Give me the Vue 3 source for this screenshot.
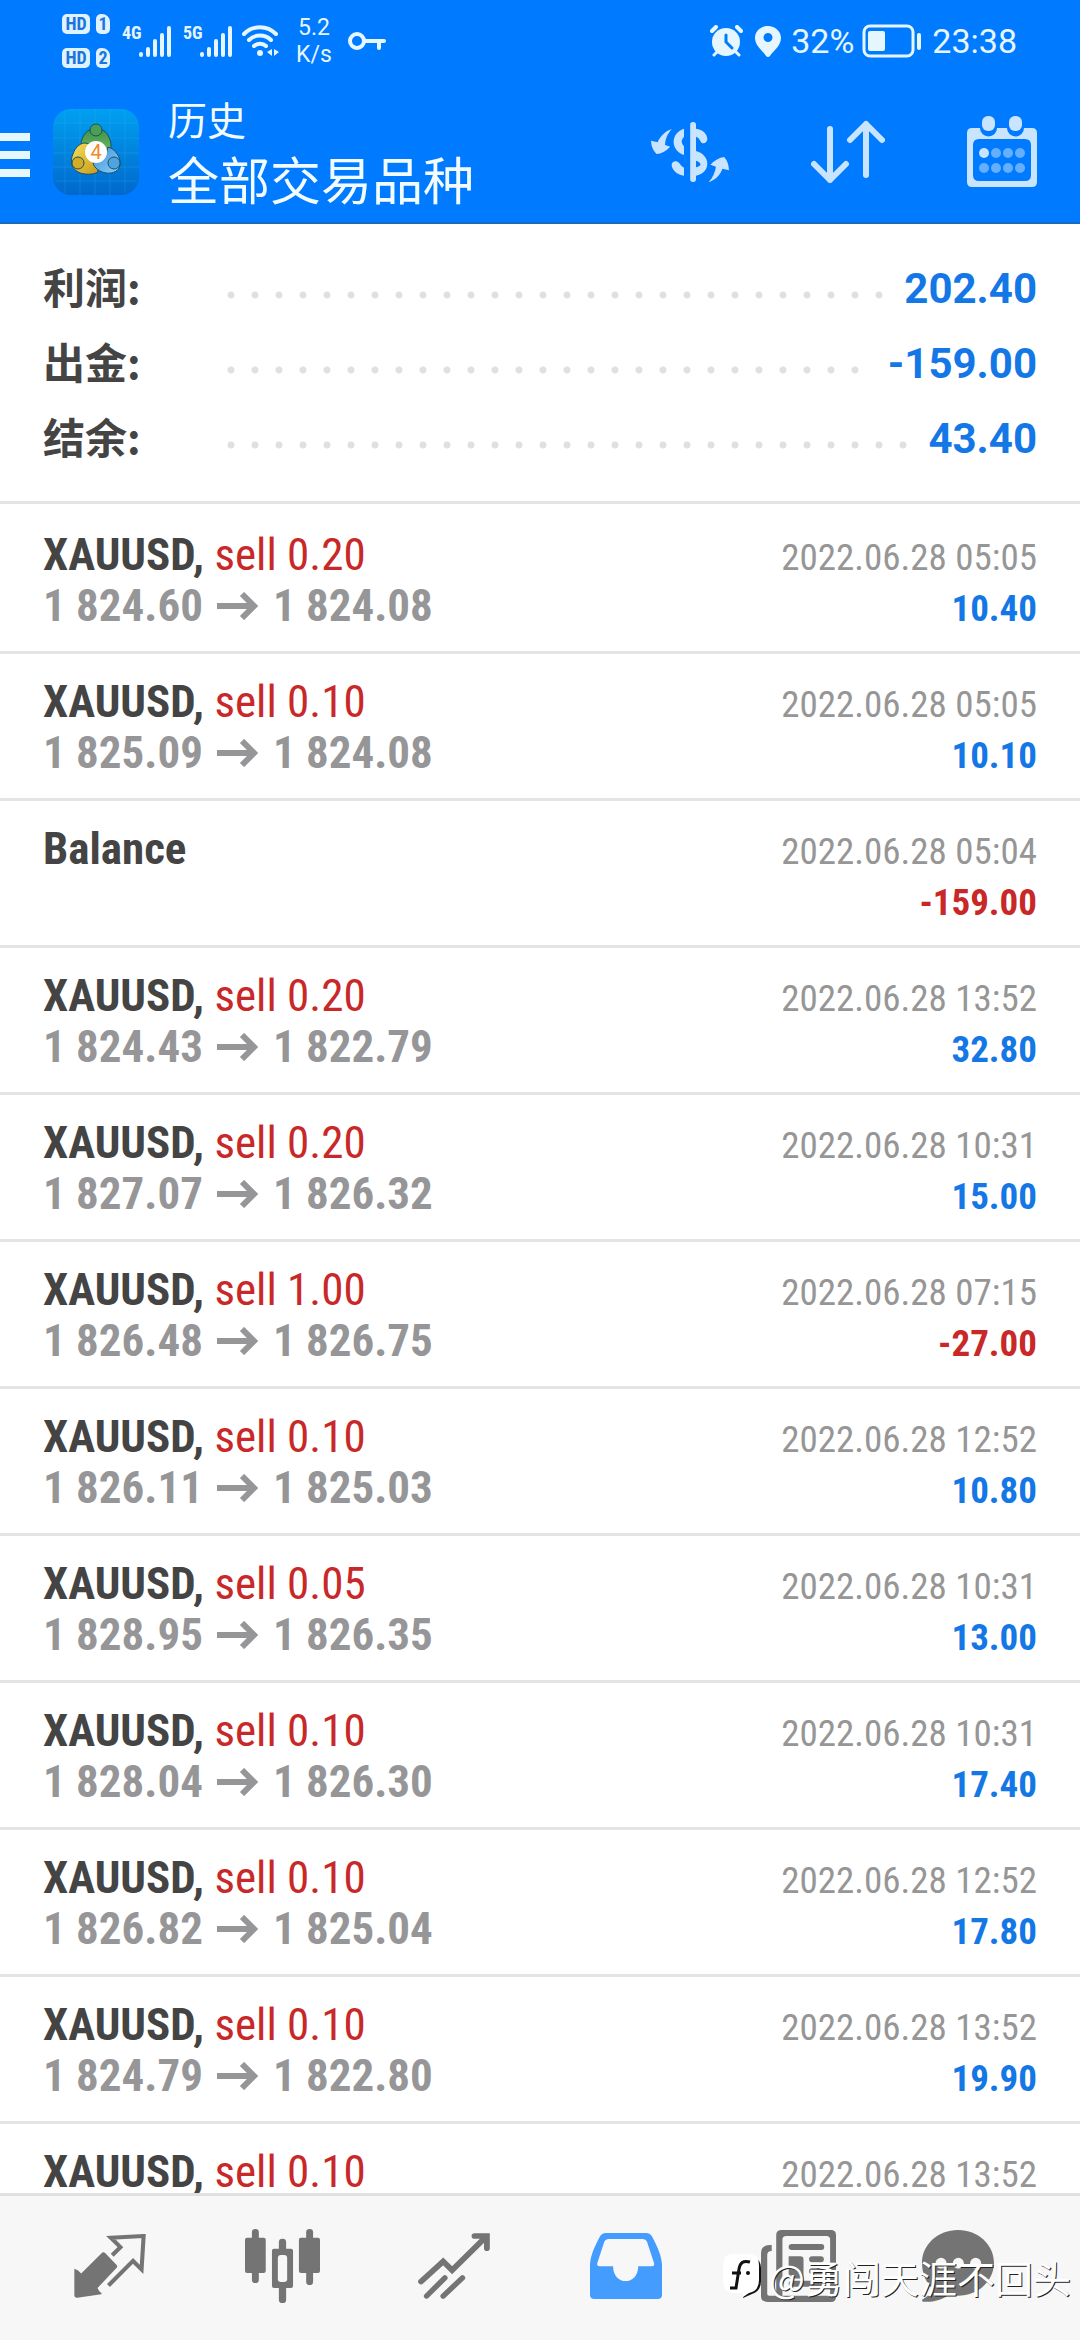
<script setup>
const summary = [
  { label: '利润:', value: '202.40' },
  { label: '出金:', value: '-159.00' },
  { label: '结余:', value: '43.40' },
]

const deals = [
  { symbol: 'XAUUSD', volume: '0.20', open: '1 824.60', close: '1 824.08', time: '2022.06.28 05:05', profit: '10.40' },
  { symbol: 'XAUUSD', volume: '0.10', open: '1 825.09', close: '1 824.08', time: '2022.06.28 05:05', profit: '10.10' },
  { symbol: 'Balance', time: '2022.06.28 05:04', profit: '-159.00' },
  { symbol: 'XAUUSD', volume: '0.20', open: '1 824.43', close: '1 822.79', time: '2022.06.28 13:52', profit: '32.80' },
  { symbol: 'XAUUSD', volume: '0.20', open: '1 827.07', close: '1 826.32', time: '2022.06.28 10:31', profit: '15.00' },
  { symbol: 'XAUUSD', volume: '1.00', open: '1 826.48', close: '1 826.75', time: '2022.06.28 07:15', profit: '-27.00' },
  { symbol: 'XAUUSD', volume: '0.10', open: '1 826.11', close: '1 825.03', time: '2022.06.28 12:52', profit: '10.80' },
  { symbol: 'XAUUSD', volume: '0.05', open: '1 828.95', close: '1 826.35', time: '2022.06.28 10:31', profit: '13.00' },
  { symbol: 'XAUUSD', volume: '0.10', open: '1 828.04', close: '1 826.30', time: '2022.06.28 10:31', profit: '17.40' },
  { symbol: 'XAUUSD', volume: '0.10', open: '1 826.82', close: '1 825.04', time: '2022.06.28 12:52', profit: '17.80' },
  { symbol: 'XAUUSD', volume: '0.10', open: '1 824.79', close: '1 822.80', time: '2022.06.28 13:52', profit: '19.90' },
  { symbol: 'XAUUSD', volume: '0.10', time: '2022.06.28 13:52' },
]
</script>

<template>
  <div class="screen">
    <header class="header">
      <div class="status">
        <div class="sims">
          <div class="sim"><span class="hd">HD</span><span class="slot">1</span></div>
          <div class="sim"><span class="hd">HD</span><span class="slot">2</span></div>
        </div>
        <div class="signal">
          <span class="gen">4G</span>
          <svg width="32" height="31" viewBox="0 0 32 31" stroke="currentColor" stroke-width="4" stroke-linecap="round">
            <path d="M2 28v1M9 23v6M16 15v14M23 9v20M30 2v27" />
          </svg>
        </div>
        <div class="signal">
          <span class="gen">5G</span>
          <svg width="32" height="31" viewBox="0 0 32 31" stroke="currentColor" stroke-width="4" stroke-linecap="round">
            <path d="M2 28v1M9 23v6M16 15v14M23 9v20M30 2v27" />
          </svg>
        </div>
        <svg class="wifi" width="38" height="32" viewBox="0 0 38 32" fill="none" stroke="currentColor" stroke-width="4" stroke-linecap="round">
          <path d="M2 9c9-9 23-9 32 0M7 15c6-6 16-6 22 0M12 21c3-3 9-3 12 0" />
          <circle cx="18" cy="28" r="3" fill="currentColor" stroke="none" />
          <path d="M30 24v7l-5-4zM32 24v7l5-4z" fill="currentColor" stroke="none" />
        </svg>
        <div class="speed"><span>5.2</span><span>K/s</span></div>
        <svg class="key" width="38" height="20" viewBox="0 0 38 20" fill="none" stroke="currentColor" stroke-width="4">
          <circle cx="9" cy="10" r="7" />
          <path d="M16 10h20M31 10v7" stroke-linecap="round" />
        </svg>
        <div class="spacer"></div>
        <svg class="alarm" width="33" height="32" viewBox="0 0 33 32" fill="none" stroke="currentColor" stroke-linecap="round">
          <circle cx="16" cy="17" r="14" fill="currentColor" stroke="none" />
          <path d="M2 6l4-4M31 6l-4-4" stroke-width="4" />
          <path d="M4 30l4-4M29 30l-4-4" stroke-width="3" />
          <path d="M16 10v7l6 6" stroke="#007aff" stroke-width="3" />
        </svg>
        <svg class="pin" width="26" height="32" viewBox="0 0 26 32">
          <path fill="currentColor" fill-rule="evenodd" d="M13 1C6 1 0 6 0 13c0 8 8 13 11 18q2 2 4 0c3-5 11-10 11-18C26 6 20 1 13 1zm0 7a4 4 0 1 1 0 9 4 4 0 0 1 0-9z" />
        </svg>
        <span class="clock">32%</span>
        <svg class="battery" width="60" height="34" viewBox="0 0 60 34">
          <rect x="2" y="2" width="49" height="30" rx="6" fill="none" stroke="currentColor" stroke-width="3" />
          <rect x="6" y="7" width="17" height="20" rx="2" fill="currentColor" />
          <rect x="55" y="9" width="4" height="17" rx="2" fill="currentColor" />
        </svg>
        <span class="clock">23:38</span>
      </div>

      <div class="appbar">
        <button class="menu" aria-label="Menu"><i></i><i></i><i></i></button>
        <svg class="logo" width="86" height="86" viewBox="0 0 86 86">
          <defs>
            <linearGradient id="tile" x1="0" y1="0" x2="0" y2="1">
              <stop offset="0" stop-color="#00a0f0" />
              <stop offset="1" stop-color="#0068cc" />
            </linearGradient>
            <linearGradient id="green" x1="0" y1="0" x2="0" y2="1">
              <stop offset="0" stop-color="#3c8f45" />
              <stop offset="1" stop-color="#7cc46a" />
            </linearGradient>
            <linearGradient id="gold" x1="0" y1="0" x2="1" y2="1">
              <stop offset="0" stop-color="#f6e05a" />
              <stop offset="1" stop-color="#c79a1c" />
            </linearGradient>
            <linearGradient id="sky" x1="0" y1="0" x2="1" y2="1">
              <stop offset="0" stop-color="#3b8fd6" />
              <stop offset="1" stop-color="#8fd0f8" />
            </linearGradient>
          </defs>
          <rect width="86" height="86" rx="18" fill="url(#tile)" />
          <path d="M12 2v82M27 0v86M42 0v86M57 0v86M72 2v82M2 14h82M0 29h86M0 44h86M0 58h86M2 72h82" stroke="#4cc3f5" stroke-opacity=".2" fill="none" />
          <g stroke="#17506b" stroke-width="1">
            <path d="M43 19c8 0 15 8 15 18 0 7-4 11-7 12l-16-1c-4-2-7-6-7-12 0-9 7-17 15-17z" fill="url(#green)" />
            <path d="M31 34c6 0 9 4 12 12l2 17c-5 3-14 3-20 0-7-4-8-11-5-18 2-6 6-10 11-11z" fill="url(#gold)" />
            <path d="M55 38c8 2 13 11 12 18-1 6-7 9-14 8-6-1-12-5-13-10l12-6z" fill="url(#sky)" />
            <circle cx="43" cy="21" r="6" fill="#4aa052" />
            <circle cx="25" cy="54" r="6" fill="#d3ac24" />
            <circle cx="61" cy="54" r="6" fill="#4fa4e0" />
          </g>
          <circle cx="43" cy="43" r="11" fill="#fff" />
          <text x="43" y="50" text-anchor="middle" class="four">4</text>
        </svg>
        <div class="titles">
          <span class="section">历史</span>
          <h1>全部交易品种</h1>
        </div>
        <button class="action" aria-label="Currency">
          <svg width="78" height="60" viewBox="322 363 227 180" preserveAspectRatio="none" fill="currentColor">
            <rect x="436" y="363" width="17" height="180" rx="8" />
            <path d="M418 383v24q-7 8-7 14t7 15v26c-40-14-40-66 0-79zM453 383c20 2 33 16 33 32q-2 12-12 12c-9 0-8-16-21-20zM453 450c44 12 44 66 0 74v-25q13-3 13-9t-13-11zM418 524v-24q-8-4-14-14c-8-10-22-5-22 6 2 18 18 30 36 32z" />
            <path d="M383 384c-12 12-20 31-20 48l15 5q-18 20-40 22-15-15-16-40l19 5c8-18 22-34 42-40zM489 544c12-12 20-31 22-47l-16-6q18-20 40-23 13 15 14 40l-19-5c-6 18-22 35-41 41z" />
          </svg>
        </button>
        <button class="action" aria-label="Sort">
          <svg width="74" height="64" viewBox="0 0 74 64" fill="none" stroke="currentColor" stroke-width="6" stroke-linecap="round" stroke-linejoin="round">
            <path d="M19 9v51M3 44l16 16 16-16M55 55V4M39 20L55 4l16 16" />
          </svg>
        </button>
        <button class="action" aria-label="Calendar">
          <svg width="70" height="72" viewBox="0 0 70 72" fill="currentColor">
            <path fill-rule="evenodd" d="M5 12h8a8 8 0 0 0 17 0h10a8 8 0 0 0 17 0h8q5 0 5 5v49q0 5-5 5H5q-5 0-5-5V17q0-5 5-5zM12 23q-6 0-6 6v30q0 6 6 6h46q6 0 6-6V29q0-6-6-6z" />
            <rect x="15" y="0" width="13" height="15" rx="6" />
            <rect x="42" y="0" width="13" height="15" rx="6" />
            <circle cx="17" cy="37" r="5" />
            <g opacity=".5">
              <circle cx="29" cy="37" r="5" /><circle cx="41" cy="37" r="5" /><circle cx="53" cy="37" r="5" />
              <circle cx="17" cy="52" r="5" /><circle cx="29" cy="52" r="5" /><circle cx="41" cy="52" r="5" /><circle cx="53" cy="52" r="5" />
            </g>
          </svg>
        </button>
      </div>
    </header>

    <dl class="summary">
      <div v-for="item in summary" :key="item.label" class="total">
        <dt>{{ item.label }}</dt>
        <dd class="dots"></dd>
        <dd class="sum">{{ item.value }}</dd>
      </div>
    </dl>

    <ul class="deals">
      <li v-for="(deal, i) in deals" :key="i" class="deal">
        <div class="line">
          <span class="symbol">{{ deal.symbol }}<template v-if="deal.volume">, <span class="side">sell {{ deal.volume }}</span></template></span>
          <time>{{ deal.time }}</time>
        </div>
        <div class="line">
          <span v-if="deal.open" class="prices">
            <span>{{ deal.open }}</span>
            <svg width="42" height="28" viewBox="0 0 42 28" fill="none" stroke="currentColor" stroke-width="6">
              <path d="M0 14h38M25 2l12 12-12 12" />
            </svg>
            <span>{{ deal.close }}</span>
          </span>
          <span v-if="deal.profit" class="profit" :class="{ loss: deal.profit.startsWith('-') }">{{ deal.profit }}</span>
        </div>
      </li>
    </ul>

    <nav class="nav">
      <button class="tab" aria-label="Quotes">
        <svg width="72" height="64" viewBox="214 314 211 190" preserveAspectRatio="none" fill="currentColor">
          <path d="M297 369q5-2 9 2l33 35q3 4 0 8l-56 60q4 12 12 16l-1 3-70 10q-9 1-9-8v-78q12 3 20 14z" />
          <path fill="none" stroke="currentColor" stroke-width="12" d="M326 377l24-24-28-28 96-5-6 99-25-25-72 73" />
        </svg>
      </button>
      <button class="tab" aria-label="Charts">
        <svg width="75" height="74" viewBox="709 297 217 222" preserveAspectRatio="none" fill="currentColor">
          <rect x="709" y="323" width="60" height="106" rx="6" /><rect x="729" y="297" width="20" height="162" rx="10" />
          <rect x="865" y="323" width="61" height="106" rx="6" /><rect x="886" y="297" width="20" height="168" rx="10" />
          <rect x="807" y="326" width="21" height="40" rx="10" /><rect x="807" y="464" width="21" height="55" rx="10" />
          <path fill-rule="evenodd" d="M793 356h49q6 0 6 6v106q0 6-6 6h-49q-6 0-6-6V362q0-6 6-6zM804 384v63q0 9 9 9h9q9 0 9-9v-63q0-9-9-9h-9q-9 0-9 9z" />
        </svg>
      </button>
      <button class="tab" aria-label="Trade">
        <svg width="72" height="66" viewBox="1212 305 209 200" preserveAspectRatio="none" fill="none" stroke="currentColor" stroke-width="16" stroke-linecap="round">
          <path d="M1221 452l64-61 26 27 100-103M1376 314h36v37" stroke-width="17" />
          <path d="M1290 441l-53 55M1341 441l-56 55" />
        </svg>
      </button>
      <button class="tab active" aria-label="History">
        <svg width="72" height="66" viewBox="147 305 209 199" preserveAspectRatio="none" fill="currentColor">
          <path fill-rule="evenodd" d="M193 305h117q12 0 18 12c15 30 28 60 28 86v88q0 13-13 13H160q-13 0-13-13v-88c0-30 15-60 28-86q6-12 18-12zM202 323q-10 0-14 10l-20 63q-2 9 6 9h40c0 60 73 60 73 0h40q8 0 6-9l-20-63q-4-10-14-10z" />
        </svg>
      </button>
      <button class="tab" aria-label="News">
        <svg width="75" height="72" viewBox="646 297 217 217" preserveAspectRatio="none" fill="currentColor">
          <path fill-rule="evenodd" d="M706 297h142q15 0 15 15v187q0 15-15 15H664q-18 0-18-18V368q0-26 26-26h5v18q-13 0-13 12v118q0 5 6 5h20V312q0-15 16-15zM719 315q-11 0-11 11v169h130q8 0 8-8V326q0-11-11-11z" />
          <rect x="726" y="339" width="103" height="18" rx="9" />
          <path d="M726 376h34q9 0 9 9v58h-43zM794 376h25q9 0 9 9t-9 9h-25q-9 0-9-9t9-9zM794 412h25q9 0 9 9t-9 9h-25q-9 0-9-9t9-9zM735 450h84q9 0 9 9t-9 9h-84q-9 0-9-9t9-9z" />
        </svg>
      </button>
      <button class="tab" aria-label="Messages">
        <svg width="72" height="72" viewBox="1109 297 208 217" preserveAspectRatio="none">
          <path fill="currentColor" d="M1213 297c58 0 104 44 104 99s-46 99-104 99q-14 0-26-3c-20 16-45 23-75 21q-5-3-1-7 20-12 31-29c-20-18-33-47-33-81 0-55 46-99 104-99z" />
          <g fill="#f7f7f7"><circle cx="1164" cy="397" r="16" /><circle cx="1214" cy="397" r="16" /><circle cx="1264" cy="397" r="16" /></g>
        </svg>
      </button>
      <div class="watermark">
        <svg width="40" height="46" viewBox="0 0 40 46">
          <path d="M29 3q9 2 9 11v13q0 10-9 13l-9 4 1-6z" fill="#111" />
          <path d="M10 0h16q10 0 10 12v14q0 11-10 13l-6 4v-4h-10Q0 39 0 26V13Q0 0 10 0z" fill="#fff" />
          <path d="M27 8c-7-2-10 1-11 7l-3 19H7M9 19h9" fill="none" stroke="#111" stroke-width="3" />
          <circle cx="25" cy="19" r="2" fill="#111" />
        </svg>
        <span>@勇闯天涯不回头</span>
      </div>
    </nav>
  </div>
</template>

<style>
body {
  margin: 0;
  background: #fff;
}
</style>

<style scoped>
.screen {
  display: flex;
  flex-direction: column;
  height: 100vh;
  overflow: hidden;
  background: #fff;
  color: #444;
  font-family: "Roboto Condensed", "Liberation Sans Narrow", "Noto Sans CJK SC", sans-serif;
}
button {
  margin: 0;
  padding: 0;
  border: 0;
  background: none;
  color: inherit;
}
svg {
  display: block;
  flex: none;
}
.header {
  flex: none;
  background: #007aff;
  border-bottom: 2px solid #1769c4;
  color: #e6f6ff;
}
.status {
  display: flex;
  align-items: center;
  height: 82px;
  padding: 0 63px 0 62px;
}
.sims {
  display: flex;
  flex-direction: column;
  gap: 14px;
}
.sim {
  display: flex;
  gap: 6px;
}
.hd,
.slot {
  border-radius: 5px;
  background: #dff2ff;
  color: #1a76dd;
  font: bold 18px/20px "Roboto Condensed", "Liberation Sans Narrow", sans-serif;
  text-align: center;
}
.hd {
  width: 28px;
}
.slot {
  width: 14px;
  border-top-right-radius: 8px;
}
.signal {
  display: flex;
  margin-left: 12px;
}
.gen {
  width: 17px;
  font-size: 18px;
  font-weight: bold;
  line-height: 14px;
}
.wifi {
  margin-left: 10px;
}
.speed {
  display: flex;
  flex-direction: column;
  width: 36px;
  margin-left: 16px;
  font: 23px/27px Roboto, sans-serif;
  text-align: center;
}
.key {
  margin-left: 16px;
}
.spacer {
  flex: 1;
}
.pin {
  margin-left: 12px;
}
.clock {
  margin-left: 10px;
  font: 34px/40px Roboto, sans-serif;
}
.battery {
  margin-left: 8px;
}
.appbar {
  display: flex;
  align-items: center;
  height: 140px;
  padding-right: 43px;
}
.menu {
  display: flex;
  flex-direction: column;
  gap: 10px;
  width: 30px;
  padding-top: 6px;
}
.menu i {
  height: 8px;
  background: #e6f8ff;
}
.logo {
  margin-left: 23px;
}
.four {
  fill: #f08a24;
  font: 20px Roboto, sans-serif;
}
.titles {
  display: flex;
  flex: 1;
  flex-direction: column;
  margin-left: 29px;
  padding-bottom: 8px;
  color: #f2fcff;
  font-family: "Noto Sans CJK SC", sans-serif;
}
.section {
  font-size: 39px;
  line-height: 60px;
}
h1 {
  margin: 0;
  font-size: 51px;
  font-weight: normal;
  line-height: 60px;
}
.action {
  margin-left: 82px;
  color: #c8e4ff;
}
.summary {
  flex: none;
  margin: 0;
  padding: 26px 43px;
  border-bottom: 3px solid #e4e4e4;
}
.total {
  display: flex;
  align-items: flex-start;
  height: 75px;
}
dt {
  width: 176px;
  font: bold 42px/72px "Noto Sans CJK SC", sans-serif;
}
dd {
  margin: 0;
}
.dots {
  flex: 1;
  height: 75px;
  margin-right: 14px;
  background: radial-gradient(circle, #e0e0e0 3px, transparent 4px) 0 37px / 24px 16px repeat-x;
}
.sum {
  color: #1477e6;
  font: bold 42px/78px Roboto, sans-serif;
}
.deals {
  flex: 1;
  min-height: 0;
  margin: 0;
  padding: 3px 0 0;
  overflow: hidden;
  list-style: none;
}
.deal {
  padding: 22px 43px 20px;
  border-bottom: 3px solid #e4e4e4;
}
.line {
  display: flex;
  align-items: baseline;
  height: 51px;
  line-height: 51px;
  white-space: nowrap;
}
/* keeps the baseline of a line that has no left-hand text */
.line::before {
  content: "\200b";
  font-size: 45px;
}
.symbol {
  font-size: 45px;
  font-weight: bold;
}
.side {
  color: #c82828;
  font-weight: normal;
}
.prices {
  display: flex;
  align-items: center;
  gap: 14px;
  color: #969698;
  font-size: 45px;
  font-weight: bold;
}
time,
.profit {
  margin-left: auto;
  font-size: 37px;
}
time {
  color: #969696;
}
.profit {
  color: #1477e6;
  font-weight: bold;
}
.profit.loss {
  color: #c82828;
}
.nav {
  position: relative;
  display: flex;
  flex: none;
  height: 139px;
  padding: 0 48px 5px 24px;
  border-top: 3px solid #e0e0e0;
  background: #f7f7f7;
  color: #747474;
}
.tab {
  display: flex;
  flex: 172 1 0;
  align-items: center;
  justify-content: center;
}
.tab:nth-child(6) {
  flex-grow: 148;
}
.tab.active {
  color: #459cff;
}
.watermark {
  position: absolute;
  right: 9px;
  bottom: 38px;
  display: flex;
  align-items: center;
  gap: 6px;
  color: #fff;
  font: 38px/50px "Noto Sans CJK SC", sans-serif;
  text-shadow: 1px 1px 0 #222;
}
</style>
